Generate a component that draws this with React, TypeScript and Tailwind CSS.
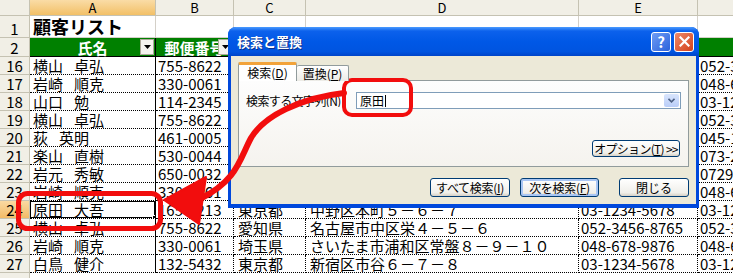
import React from 'react';

const cols = ['w-[30px]', 'w-[126px]', 'w-[78px]', 'w-[72px]', 'w-[273px]', 'w-[119px]', 'w-[80px]'];

interface Row {
  n: number;
  a: string;
  b: string;
  c: string;
  d: string;
  e: string;
}

const rows: Row[] = [
  { n: 16, a: '横山 卓弘', b: '755-8622', c: '愛知県', d: '名古屋市中区栄４－５－６', e: '052-3456-8765' },
  { n: 17, a: '岩崎 順克', b: '330-0061', c: '埼玉県', d: 'さいたま市浦和区常盤８－９－１０', e: '048-678-9876' },
  { n: 18, a: '山口 勉', b: '114-2345', c: '東京都', d: '北区王子１－２－３', e: '03-1234-5678' },
  { n: 19, a: '横山 卓弘', b: '755-8622', c: '愛知県', d: '名古屋市中区栄４－５－６', e: '052-3456-8765' },
  { n: 20, a: '荻 英明', b: '461-0005', c: '神奈川県', d: '横浜市西区高島２－３－４', e: '045-123-4567' },
  { n: 21, a: '楽山 直樹', b: '530-0044', c: '和歌山県', d: '和歌山市本町３－４－５', e: '073-234-5678' },
  { n: 22, a: '岩元 秀敏', b: '650-0032', c: '大阪府', d: '堺市中区深井６－７－８', e: '0729-12-3456' },
  { n: 23, a: '岩崎 順克', b: '330-0061', c: '埼玉県', d: 'さいたま市浦和区常盤８－９－１０', e: '048-678-9876' },
  { n: 24, a: '原田 大吾', b: '165-3213', c: '東京都', d: '中野区本町５－６－７', e: '03-1234-5678' },
  { n: 25, a: '横山 卓弘', b: '755-8622', c: '愛知県', d: '名古屋市中区栄４－５－６', e: '052-3456-8765' },
  { n: 26, a: '岩崎 順克', b: '330-0061', c: '埼玉県', d: 'さいたま市浦和区常盤８－９－１０', e: '048-678-9876' },
  { n: 27, a: '白鳥 健介', b: '132-5432', c: '東京都', d: '新宿区市谷６－７－８', e: '03-1234-5678' },
];

const hdr = 'flex shrink-0 items-center justify-center border-r border-b border-[#C5C2B2] text-[13px] leading-none';
const dataCell =
  'flex shrink-0 items-end overflow-hidden whitespace-nowrap border-r border-b border-dotted border-black pl-[2px] text-[15px] leading-[17px]';

function Name({ value }: { value: string }) {
  const [family, given] = value.split(' ');
  return (
    <>
      <span>{family}</span>
      <span className="ml-[11px]">{given}</span>
    </>
  );
}

function FilterButton() {
  return (
    <div className="absolute right-[1px] bottom-[1px] flex h-[16px] w-[14px] items-center justify-center border border-[#ACA899] bg-[#F4F3EE]">
      <svg width="7" height="4" viewBox="0 0 7 4">
        <path d="M0 0h7L3.5 4z" fill="#000" />
      </svg>
    </div>
  );
}

function Sheet() {
  return (
    <div className="flex flex-col">
      {/* column headers */}
      <div className="flex h-[16px]">
        <div className={`${cols[0]} ${hdr} bg-[#F1EFE6]`} />
        {['A', 'B', 'C', 'D', 'E', 'F'].map((l, i) => (
          <div
            key={l}
            className={`${cols[i + 1]} ${hdr} ${
              i === 0 ? 'bg-[linear-gradient(#FADCA6,#F2C067)]' : 'bg-[#F1EFE6]'
            }`}
          >
            {l}
          </div>
        ))}
      </div>

      {/* row 1 */}
      <div className="flex h-[22px]">
        <div className={`${cols[0]} ${hdr} items-end pb-[1px] text-[15px] bg-[#F1EFE6]`}>1</div>
        <div className={`${cols[1]} flex shrink-0 items-end overflow-visible whitespace-nowrap border-r border-b border-[#D4D0C8] pl-[3px] text-[18px] font-bold leading-[21px]`}>
          顧客リスト
        </div>
        {cols.slice(2).map((c, i) => (
          <div key={i} className={`${c} shrink-0 border-r border-b border-[#D4D0C8]`} />
        ))}
      </div>

      {/* row 2 */}
      <div className="flex h-[19px]">
        <div className={`${cols[0]} ${hdr} items-end pb-[1px] text-[15px] bg-[#F1EFE6]`}>2</div>
        <div className={`${cols[1]} relative flex shrink-0 items-end justify-center border-r border-b border-black bg-[#008000] text-[15px] font-bold leading-[17px] text-white`}>
          氏名
          <FilterButton />
        </div>
        <div className={`${cols[2]} relative flex shrink-0 items-end justify-center overflow-hidden whitespace-nowrap border-r border-b border-black bg-[#008000] text-[15px] font-bold leading-[17px] text-white`}>
          郵便番号
          <FilterButton />
        </div>
        <div className={`${cols[3]} shrink-0 border-r border-b border-black bg-[#008000]`} />
        <div className={`${cols[4]} shrink-0 border-r border-b border-black bg-[#008000]`} />
        <div className={`${cols[5]} shrink-0 border-r border-b border-black bg-[#008000]`} />
        <div className={`${cols[6]} shrink-0 border-b border-black bg-[#008000]`} />
      </div>

      {rows.map((r) => (
        <div key={r.n} className="flex h-[18px]">
          <div
            className={`${cols[0]} ${hdr} items-end pb-[1px] text-[15px] ${
              r.n === 24 ? 'bg-[linear-gradient(#FAD9A2,#F3BB66)]' : 'bg-[#F1EFE6]'
            }`}
          >
            {r.n}
          </div>
          <div className={`${cols[1]} ${dataCell} relative pl-[3px] [border-right-style:solid]`}>
            <Name value={r.a} />
            {r.n === 24 && (
              <div className="absolute -top-[1px] -left-[1px] -right-[1px] -bottom-[1px] border-2 border-black">
                <div className="absolute -right-[3px] -bottom-[3px] h-[5px] w-[5px] border border-white bg-black" />
              </div>
            )}
          </div>
          <div className={`${cols[2]} ${dataCell}`}>{r.b}</div>
          <div className={`${cols[3]} ${dataCell} pl-[4px]`}>{r.c}</div>
          <div className={`${cols[4]} ${dataCell} pl-[4px]`}>{r.d}</div>
          <div className={`${cols[5]} ${dataCell}`}>{r.e}</div>
          <div className={`${cols[6]} ${dataCell}`}>{r.e}</div>
        </div>
      ))}

      <div className="flex h-[18px]">
        <div className={`${cols[0]} ${hdr} bg-[#F1EFE6]`} />
      </div>
    </div>
  );
}

function XpButton({
  children,
  className = '',
  focused = false,
}: {
  children: React.ReactNode;
  className?: string;
  focused?: boolean;
}) {
  return (
    <div
      className={`flex items-center justify-center rounded-[3px] border border-[#003C74] bg-[linear-gradient(#FFFFFF,#F0EFEA_80%,#D6D0C5)] text-[12px] leading-none whitespace-nowrap text-black ${
        focused ? 'shadow-[inset_0_0_0_2px_#A9C6F4]' : ''
      } ${className}`}
    >
      {children}
    </div>
  );
}

function Dialog() {
  return (
    <div className="absolute top-[27px] left-[228px] flex h-[181px] w-[471px] flex-col overflow-hidden rounded-t-[8px] bg-[#0048DC]">
      {/* title bar */}
      <div className="flex h-[29px] shrink-0 items-center bg-[linear-gradient(180deg,#4A9BFF_0%,#0C61EC_14%,#0058E6_50%,#0054E0_85%,#0044C8_100%)] pr-[5px] pl-[9px]">
        <span className="text-[13px] font-bold text-white [text-shadow:1px_1px_0_#0A2E8C]">検索と置換</span>
        <div className="ml-auto flex gap-[3px]">
          <div className="flex h-[20px] w-[20px] items-center justify-center rounded-[3px] border border-white bg-[linear-gradient(135deg,#6E9CF5,#2B62DB)] text-[15px] font-bold leading-none text-white">
            ?
          </div>
          <div className="flex h-[20px] w-[20px] items-center justify-center rounded-[3px] border border-white bg-[linear-gradient(135deg,#EE8A6A,#D4401A)]">
            <svg width="11" height="11" viewBox="0 0 11 11">
              <path d="M1.5 1.5l8 8M9.5 1.5l-8 8" stroke="#fff" strokeWidth="2.2" strokeLinecap="square" />
            </svg>
          </div>
        </div>
      </div>

      {/* body */}
      <div className="mx-[3px] mb-[4px] flex flex-1 flex-col bg-[#ECE9D8] pt-[6px] pr-[7px] pl-[7px]">
        <div className="relative z-10 flex h-[19px] items-end">
          <div className="flex h-[19px] w-[59px] items-center justify-center rounded-t-[2px] border-x border-t-[3px] border-x-[#919B9C] border-t-[#F2A33A] bg-white pb-[1px] text-[12px] leading-none">
            検索(<u>D</u>)
          </div>
          <div className="flex h-[16px] w-[52px] items-center justify-center rounded-t-[2px] border-t border-r border-[#919B9C] bg-[linear-gradient(#FFFFFF,#ECEBE6)] text-[12px] leading-none">
            置換(<u>P</u>)
          </div>
        </div>
        <div className="-mt-[1px] flex h-[87px] flex-col border border-[#919B9C] bg-[linear-gradient(#FDFDFD,#F5F3EE)] pt-[11px] pr-[7px] pl-[7px]">
          <div className="flex items-center">
            <span className="w-[110px] shrink-0 overflow-hidden text-[12px] leading-none tracking-[-0.6px] whitespace-nowrap">
              検索する文字列(<u>N</u>)
            </span>
            <div className="flex h-[17px] flex-1 items-center border border-[#7F9DB9] bg-white">
              <span className="pl-[3px] text-[12px] leading-none">原田</span>
              <span className="ml-[1px] h-[12px] w-[1px] bg-black" />
              <div className="mr-[1px] ml-auto flex h-[13px] w-[15px] items-center justify-center rounded-[2px] bg-[linear-gradient(#D9E5FD,#B9CDF8)]">
                <svg width="7" height="5" viewBox="0 0 7 5">
                  <path d="M0.5 0.8L3.5 3.8L6.5 0.8" stroke="#4D6185" strokeWidth="1.6" fill="none" />
                </svg>
              </div>
            </div>
          </div>
          <XpButton className="mt-[31px] mr-[1px] h-[17px] w-[88px] self-end text-[11px] tracking-[-0.7px]">
            オプション(<u>T</u>) &gt;&gt;
          </XpButton>
        </div>
        <div className="mt-[11px] flex justify-end">
          <XpButton className="h-[19px] w-[80px] tracking-[-0.3px]">すべて検索(<u>I</u>)</XpButton>
          <XpButton className="ml-[10px] h-[19px] w-[79px] tracking-[-0.3px]" focused>
            次を検索(<u>F</u>)
          </XpButton>
          <XpButton className="ml-[20px] h-[19px] w-[70px]">閉じる</XpButton>
        </div>
      </div>
    </div>
  );
}

function Annotations() {
  return (
    <svg className="pointer-events-none absolute top-0 left-0" width="733" height="278" viewBox="0 0 733 278">
      <rect x="344" y="80" width="67" height="35" rx="8" fill="none" stroke="#F20D0D" strokeWidth="4" />
      <rect x="18.5" y="193.5" width="142" height="35" rx="9" fill="none" stroke="#F20D0D" strokeWidth="5" />
      <path
        d="M344 93 C300 98 264 116 251 138 C240 158 238 180 200 199"
        fill="none"
        stroke="#F20D0D"
        strokeWidth="6"
        strokeLinecap="round"
      />
      <path d="M164 200 L206 177 L199 224 Z" fill="#F20D0D" stroke="#F20D0D" strokeWidth="2" strokeLinejoin="round" />
    </svg>
  );
}

export default function App() {
  return (
    <div className="relative h-[278px] w-[733px] overflow-hidden bg-white font-['Noto_Sans_CJK_JP','Noto_Sans',sans-serif] text-black">
      <Sheet />
      <Dialog />
      <Annotations />
    </div>
  );
}
